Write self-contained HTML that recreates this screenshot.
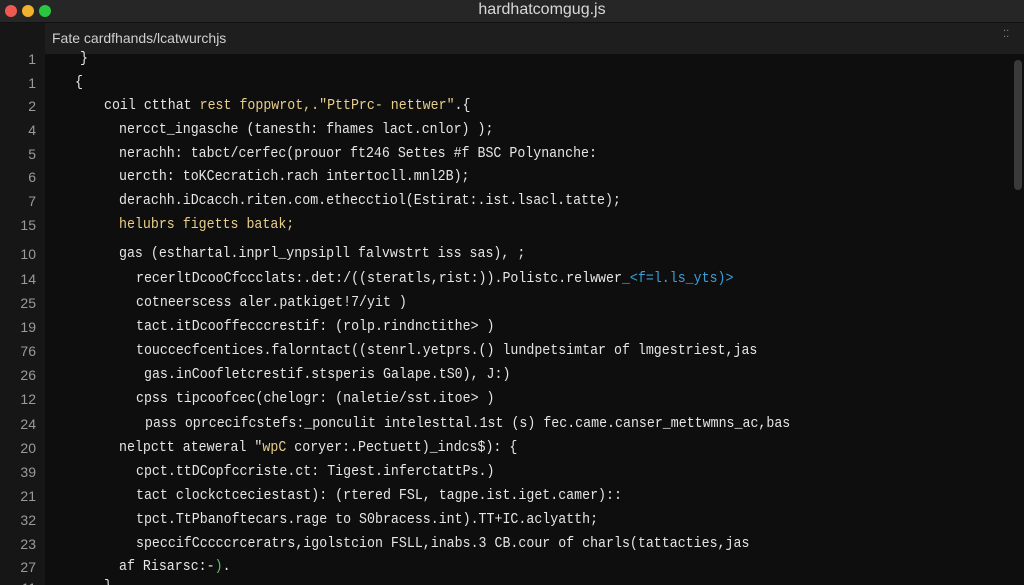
<!DOCTYPE html>
<html><head><style>
html,body{margin:0;width:1024px;height:585px;overflow:hidden}
body{background:#0e0e0e;font-family:"Liberation Mono",monospace;position:relative}
.tb{position:absolute;left:0;top:0;width:1024px;height:22px;background:#262626;border-bottom:1px solid #111}
.dot{position:absolute;top:5px;width:12px;height:12px;border-radius:50%}
.title{position:absolute;top:1px;left:0;width:1024px;text-align:center;color:#d8d8d8;font:16px "Liberation Sans",sans-serif;padding-left:60px;box-sizing:border-box}
.tab{position:absolute;top:23px;left:45px;width:979px;height:31px;background:#1e1e1e}
.tab span{position:absolute;left:7px;top:7px;color:#cfcfcf;font:14px "Liberation Sans",sans-serif}
.gut{position:absolute;left:0;top:23px;width:45px;height:562px;background:#161616}
.l{position:absolute;white-space:pre;color:#e6e6e6;font-size:15px;line-height:17px;transform:scaleX(0.885);transform-origin:0 0}
.n{position:absolute;width:36px;text-align:right;color:#9a9a9a;font:14px "Liberation Sans",sans-serif;line-height:16px}
.y{color:#e8cf8a}.b{color:#3a9fd8}.g{color:#5fbf6a}
.sb{position:absolute;left:1014px;top:60px;width:8px;height:130px;border-radius:4px;background:#3a3a3a}
</style></head><body>
<div class="tb"><div class="dot" style="left:5px;background:#ee5a52"></div><div class="dot" style="left:22px;background:#f2b32c"></div><div class="dot" style="left:39px;background:#28c840"></div><div class="title">hardhatcomgug.js</div></div>
<div class="gut"></div>
<div class="tab"><span>Fate cardfhands/lcatwurchjs</span><span style="left:958px;top:6px;font-size:10px;color:#888">⁚⁚</span></div>
<div class="sb"></div>

<div class="n" style="top:51px">1</div><div class="l" style="top:50px;left:80px">}</div>
<div class="n" style="top:75px">1</div><div class="l" style="top:74px;left:75px">{</div>
<div class="n" style="top:98px">2</div><div class="l" style="top:97px;left:104px">coil ctthat <span class="y">rest foppwrot,."PttPrc- nettwer"</span>.{</div>
<div class="n" style="top:122px">4</div><div class="l" style="top:121px;left:119px">nercct_ingasche (tanesth: fhames lact.cnlor) );</div>
<div class="n" style="top:146px">5</div><div class="l" style="top:145px;left:119px">nerachh: tabct/cerfec(prouor ft246 Settes #f BSC Polynanche:</div>
<div class="n" style="top:169px">6</div><div class="l" style="top:168px;left:119px">uercth: toKCecratich.rach intertocll.mnl2B);</div>
<div class="n" style="top:193px">7</div><div class="l" style="top:192px;left:119px">derachh.iDcacch.riten.com.ethecctiol(Estirat:.ist.lsacl.tatte);</div>
<div class="n" style="top:217px">15</div><div class="l y" style="top:216px;left:119px">helubrs figetts batak;</div>
<div class="n" style="top:246px">10</div><div class="l" style="top:245px;left:119px">gas (esthartal.inprl_ynpsipll falvwstrt iss sas), ;</div>
<div class="n" style="top:271px">14</div><div class="l" style="top:270px;left:136px">recerltDcooCfccclats:.det:/((steratls,rist:)).Polistc.relwwer<span class="b">_&lt;f=l.ls_yts)&gt;</span></div>
<div class="n" style="top:295px">25</div><div class="l" style="top:294px;left:136px">cotneerscess aler.patkiget!7/yit )</div>
<div class="n" style="top:319px">19</div><div class="l" style="top:318px;left:136px">tact.itDcooffecccrestif: (rolp.rindnctithe&gt; )</div>
<div class="n" style="top:343px">76</div><div class="l" style="top:342px;left:136px">touccecfcentices.falorntact((stenrl.yetprs.() lundpetsimtar of lmgestriest,jas</div>
<div class="n" style="top:367px">26</div><div class="l" style="top:366px;left:144px">gas.inCoofletcrestif.stsperis Galape.tS0), J:)</div>
<div class="n" style="top:391px">12</div><div class="l" style="top:390px;left:136px">cpss tipcoofcec(chelogr: (naletie/sst.itoe&gt; )</div>
<div class="n" style="top:416px">24</div><div class="l" style="top:415px;left:145px">pass oprcecifcstefs:_ponculit intelesttal.1st (s) fec.came.canser_mettwmns_ac,bas</div>
<div class="n" style="top:440px">20</div><div class="l" style="top:439px;left:119px">nelpctt ateweral "<span class="y">wpC</span> coryer:.Pectuett)_indcs$): {</div>
<div class="n" style="top:464px">39</div><div class="l" style="top:463px;left:136px">cpct.ttDCopfccriste.ct: Tigest.inferctattPs.)</div>
<div class="n" style="top:488px">21</div><div class="l" style="top:487px;left:136px">tact clockctceciestast): (rtered FSL, tagpe.ist.iget.camer)::</div>
<div class="n" style="top:512px">32</div><div class="l" style="top:511px;left:136px">tpct.TtPbanoftecars.rage to S0bracess.int).TT+IC.aclyatth;</div>
<div class="n" style="top:536px">23</div><div class="l" style="top:535px;left:136px">speccifCccccrceratrs,igolstcion FSLL,inabs.3 CB.cour of charls(tattacties,jas</div>
<div class="n" style="top:559px">27</div><div class="l" style="top:558px;left:119px">af Risarsc:-<span class="g">)</span>.</div>
<div class="n" style="top:580px">11</div><div class="l" style="top:578px;left:104px">}</div>
</body></html>
